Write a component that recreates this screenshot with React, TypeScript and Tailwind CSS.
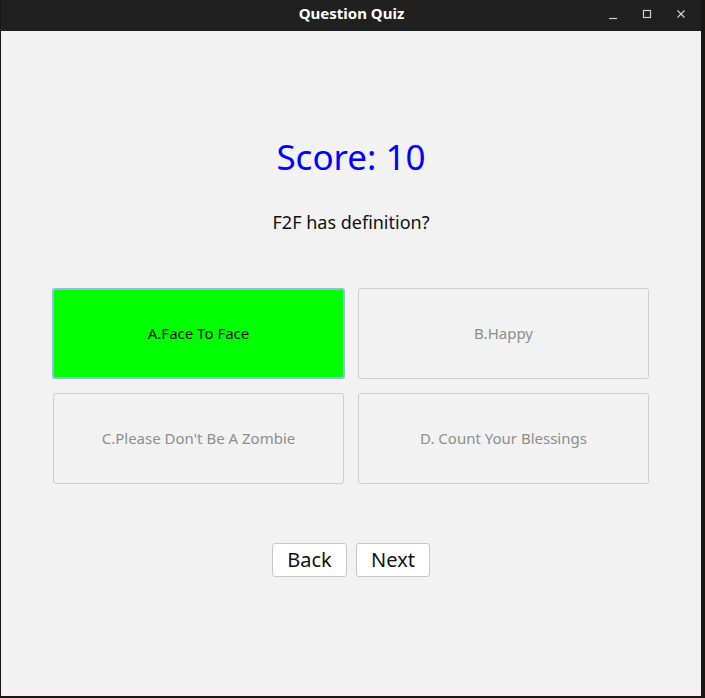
export default function App() {
  const options = [
    { label: "A.Face To Face", selected: true },
    { label: "B.Happy", selected: false },
    { label: "C.Please Don't Be A Zombie", selected: false },
    { label: "D. Count Your Blessings", selected: false },
  ];

  return (
    <div className="w-[705px] h-[698px] bg-[#1d150f] overflow-hidden" style={{ fontFamily: '"Noto Sans", "Open Sans", sans-serif' }}>
      <div className="ml-px w-[700px] h-[696px] flex flex-col bg-[#f2f2f2]">
        {/* Title bar */}
        <div className="relative h-[31px] bg-[#202020] flex items-center justify-center shrink-0">
          <span className="text-white font-bold text-[15px] ml-[1px] -mt-[4px]">Question Quiz</span>
          <div className="absolute right-[14px] top-0 h-[27px] flex items-center gap-[22px] text-[#d0d0d0]">
            <svg width="12" height="12" viewBox="0 0 12 12"><path d="M2 10.5h8" stroke="currentColor" strokeWidth="1.2" /></svg>
            <svg width="12" height="12" viewBox="0 0 12 12"><rect x="2.5" y="2.5" width="7" height="7" fill="none" stroke="currentColor" strokeWidth="1.2" /></svg>
            <svg width="12" height="12" viewBox="0 0 12 12"><path d="M2.5 2.5l7 7M9.5 2.5l-7 7" stroke="currentColor" strokeWidth="1.2" /></svg>
          </div>
        </div>

        {/* Content */}
        <div className="flex flex-col items-center">
          <div className="mt-[103px] text-[35px] leading-[46px] text-[#0000ff]">Score: 10</div>
          <div className="mt-[30px] text-[18px] leading-[24px] text-[#111]">F2F has definition?</div>

          <div className="mt-[54px] self-start ml-[51px] grid grid-cols-[293px_291px] gap-x-[13px] gap-y-[14px] w-[597px]">
            {options.map((o, i) =>
              o.selected ? (
                <button
                  key={o.label}
                  className="h-[91px] rounded-[3px] bg-[#00ff00] border-[2px] border-[#94bbea] text-[15px] text-[#111]"
                >
                  {o.label}
                </button>
              ) : (
                <button
                  key={o.label}
                  className={
                    i === 2
                      ? "h-[91px] rounded-[3px] bg-[#f2f2f2] border border-[#cfcfcf] text-[15px] text-[#8e8e8e] mx-[1px]"
                      : "h-[91px] rounded-[3px] bg-[#f2f2f2] border border-[#cfcfcf] text-[15px] text-[#8e8e8e]"
                  }
                >
                  {o.label}
                </button>
              )
            )}
          </div>

          <div className="mt-[59px] flex gap-[9px]">
            <button className="w-[75px] h-[34px] bg-white border border-[#c8c8c8] rounded-[3px] text-[20px] text-[#111] leading-none">
              Back
            </button>
            <button className="w-[74px] h-[34px] bg-white border border-[#c8c8c8] rounded-[3px] text-[20px] text-[#111] leading-none">
              Next
            </button>
          </div>
        </div>
      </div>
    </div>
  );
}
